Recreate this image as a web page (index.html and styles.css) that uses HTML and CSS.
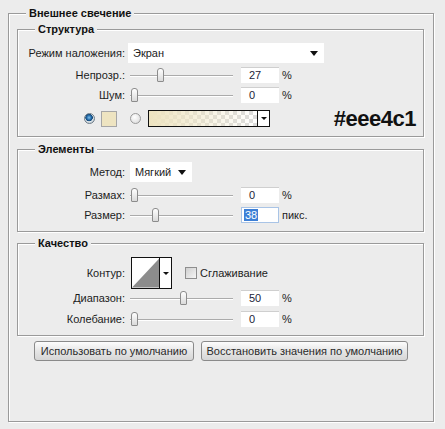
FILE: index.html
```html
<!DOCTYPE html>
<html lang="ru">
<head>
    <meta charset="UTF-8">
    <title>Внешнее свечение</title>
    <link rel="stylesheet" href="styles.css">
</head>
<body>
    <fieldset class="group outer">
        <legend>Внешнее свечение</legend>

        <fieldset class="group sect structure">
            <legend>Структура</legend>
            <div class="row row-select">
                <span class="lbl">Режим наложения:</span>
                <div class="select select-mode"><span>Экран</span><i class="caret"></i></div>
            </div>
            <div class="row row-gap4">
                <span class="lbl">Непрозр.:</span>
                <div class="slider"><div class="rail"><i class="thumb" style="left: 27%"></i></div></div>
                <span class="field">27</span><span class="unit">%</span>
            </div>
            <div class="row row-gap4">
                <span class="lbl">Шум:</span>
                <div class="slider"><div class="rail"><i class="thumb" style="left: 0%"></i></div></div>
                <span class="field">0</span><span class="unit">%</span>
            </div>
            <div class="row row-color">
                <i class="radio on"></i>
                <span class="swatch"></span>
                <i class="radio"></i>
                <div class="gradient"><span class="grad-fill"></span><span class="grad-arrow"><i class="caret small"></i></span></div>
                <span class="hex">#eee4c1</span>
            </div>
        </fieldset>

        <fieldset class="group sect elements">
            <legend>Элементы</legend>
            <div class="row row-select">
                <span class="lbl">Метод:</span>
                <div class="select select-method"><span>Мягкий</span><i class="caret"></i></div>
            </div>
            <div class="row row-gap5">
                <span class="lbl">Размах:</span>
                <div class="slider"><div class="rail"><i class="thumb" style="left: 0%"></i></div></div>
                <span class="field">0</span><span class="unit">%</span>
            </div>
            <div class="row row-gap4">
                <span class="lbl">Размер:</span>
                <div class="slider"><div class="rail"><i class="thumb" style="left: 22%"></i></div></div>
                <span class="field focus"><span class="sel">38</span></span><span class="unit">пикс.</span>
            </div>
        </fieldset>

        <fieldset class="group sect quality">
            <legend>Качество</legend>
            <div class="row row-contour">
                <span class="lbl">Контур:</span>
                <div class="contour">
                    <svg width="28" height="30" viewBox="0 0 28 30">
                        <polygon points="0,30 28,0 28,30" fill="#8c8c8c"/>
                    </svg>
                    <span class="contour-arrow"><i class="caret small"></i></span>
                </div>
                <i class="check"></i>
                <span class="check-lbl">Сглаживание</span>
            </div>
            <div class="row row-gap1">
                <span class="lbl">Диапазон:</span>
                <div class="slider"><div class="rail"><i class="thumb" style="left: 51%"></i></div></div>
                <span class="field">50</span><span class="unit">%</span>
            </div>
            <div class="row row-gap5">
                <span class="lbl">Колебание:</span>
                <div class="slider"><div class="rail"><i class="thumb" style="left: 0%"></i></div></div>
                <span class="field">0</span><span class="unit">%</span>
            </div>
        </fieldset>

        <div class="buttons">
            <button class="btn btn-default">Использовать по умолчанию</button>
            <button class="btn btn-reset">Восстановить значения по умолчанию</button>
        </div>
    </fieldset>
</body>
</html>
```

FILE: styles.css
```css
body {
    margin: 0;
    width: 445px;
    height: 429px;
    overflow: hidden;
    background: #ececec;
    font-family: "Liberation Sans", Arial, sans-serif;
    font-size: 11px;
    color: #1c1c1c;
}
.group {
    border: 1px solid #9a9a9a;
    box-shadow: 1px 1px 0 #fff, inset 1px 1px 0 #fff;
    padding: 0;
    min-width: 0;
}
.group legend {
    font-weight: bold;
    color: #111;
    line-height: 13px;
    padding: 0 3px;
    margin-left: 17px;
    background: #ececec;
}
.outer {
    box-sizing: border-box;
    margin: 7px 11px 0 8px;
    height: 415px;
}
.sect {
    margin: 0 9px 0 8px;
}
.structure {
    margin-top: 3px;
    padding: 7px 0 9px;
}
.elements {
    margin-top: 6px;
    padding: 6px 0 8px;
}
.quality {
    margin-top: 5px;
    padding: 7px 0 8px;
}

.row {
    display: flex;
    align-items: center;
    height: 16px;
}
.row-select {
    height: 20px;
}
.row-gap1 { margin-top: 1px; }
.row-gap4 { margin-top: 4px; }
.row-gap5 { margin-top: 5px; }
.lbl {
    width: 107px;
    flex: none;
    text-align: right;
    white-space: nowrap;
}

.select {
    display: flex;
    align-items: center;
    height: 20px;
    background: #fff;
    box-sizing: border-box;
    padding: 0 6px 0 5px;
}
.select-mode {
    margin-left: 3px;
    width: 196px;
}
.select-method {
    margin-left: 5px;
    width: 62px;
}
.caret {
    margin-left: auto;
    width: 0;
    height: 0;
    border-top: 5px solid #111;
    border-left: 4px solid transparent;
    border-right: 4px solid transparent;
}
.caret.small {
    margin: 0;
    border-top-width: 3px;
    border-left-width: 3px;
    border-right-width: 3px;
}

.slider {
    position: relative;
    width: 103px;
    height: 16px;
    margin-left: 5px;
    flex: none;
}
.slider::before {
    content: "";
    position: absolute;
    left: 0;
    right: 0;
    top: 8px;
    height: 1px;
    background: #ababab;
    box-shadow: 0 1px 0 #fff;
}
.rail {
    position: absolute;
    left: 1px;
    top: 1px;
    width: 96px;
    height: 14px;
}
.thumb {
    position: absolute;
    top: 0;
    width: 5px;
    height: 12px;
    border: 1px solid #8c8c8c;
    border-radius: 3px 3px 1px 1px;
    background: linear-gradient(#fff, #dadada);
}
.field {
    box-sizing: border-box;
    width: 38px;
    height: 16px;
    margin-left: 8px;
    padding-left: 8px;
    background: #fff;
    border-top: 1px solid #cfcfcf;
    line-height: 15px;
    color: #1b2438;
    flex: none;
}
.field.focus {
    border: 1px solid #a9c4e6;
    padding-left: 2px;
    line-height: 14px;
}
.sel {
    background: #3d7fd6;
    color: #fff;
    padding: 0 1px;
}
.unit {
    margin-left: 3px;
}

.row-color {
    height: 17px;
    margin-top: 7px;
}
.radio {
    box-sizing: border-box;
    width: 11px;
    height: 11px;
    border-radius: 50%;
    border: 1px solid #9a9a9a;
    background: radial-gradient(circle at 40% 35%, #fff, #d6d6d6);
    flex: none;
}
.radio.on {
    margin-left: 66px;
    border-color: #6d7c88;
    background: radial-gradient(circle at 45% 40%, #7fc1ec 0, #1d63a3 2.5px, #17466f 3.5px, #e8eef2 4px, #c9d3da 5px);
}
.swatch {
    box-sizing: border-box;
    width: 16px;
    height: 16px;
    margin-left: 6px;
    background: #eee4c1;
    border: 1px solid #a6a6a6;
}
.radio:not(.on) {
    margin-left: 13px;
}
.gradient {
    display: flex;
    box-sizing: border-box;
    width: 122px;
    height: 17px;
    margin-left: 7px;
    border: 1px solid #111;
}
.grad-fill {
    flex: 1;
    background:
        linear-gradient(to right, #eee4c1, rgba(238, 228, 193, 0)),
        repeating-conic-gradient(#dcdcdc 0 25%, #fff 0 50%) 0 0 / 8px 8px;
}
.grad-arrow {
    display: flex;
    align-items: center;
    justify-content: center;
    width: 11px;
    border-left: 1px solid #111;
    background: #fff;
}
.hex {
    margin-left: auto;
    margin-right: 7px;
    font-size: 22px;
    font-weight: bold;
    letter-spacing: -0.5px;
    line-height: 17px;
    color: #111;
}

.row-contour {
    height: 32px;
}
.contour {
    display: flex;
    box-sizing: border-box;
    width: 41px;
    height: 32px;
    margin-left: 6px;
    border: 1px solid #111;
    background: #fff;
}
.contour svg {
    display: block;
}
.contour-arrow {
    display: flex;
    align-items: center;
    justify-content: center;
    width: 11px;
    border-left: 1px solid #111;
}
.check {
    box-sizing: border-box;
    width: 12px;
    height: 12px;
    margin-left: 13px;
    border: 1px solid #8e8e8e;
    background: linear-gradient(135deg, #cfcfcf, #f6f6f6);
}
.check-lbl {
    margin-left: 3px;
}

.buttons {
    display: flex;
    gap: 7px;
    margin-top: 5px;
    padding-left: 25px;
}
.btn {
    height: 20px;
    padding: 0;
    border: 1px solid #8a8a8a;
    border-radius: 3px;
    background: linear-gradient(#fdfdfd, #e6e6e6 50%, #d6d6d6);
    font-family: "Liberation Sans", Arial, sans-serif;
    font-size: 11px;
    color: #2a2a2a;
}
.btn-default {
    width: 160px;
}
.btn-reset {
    width: 207px;
}
```
